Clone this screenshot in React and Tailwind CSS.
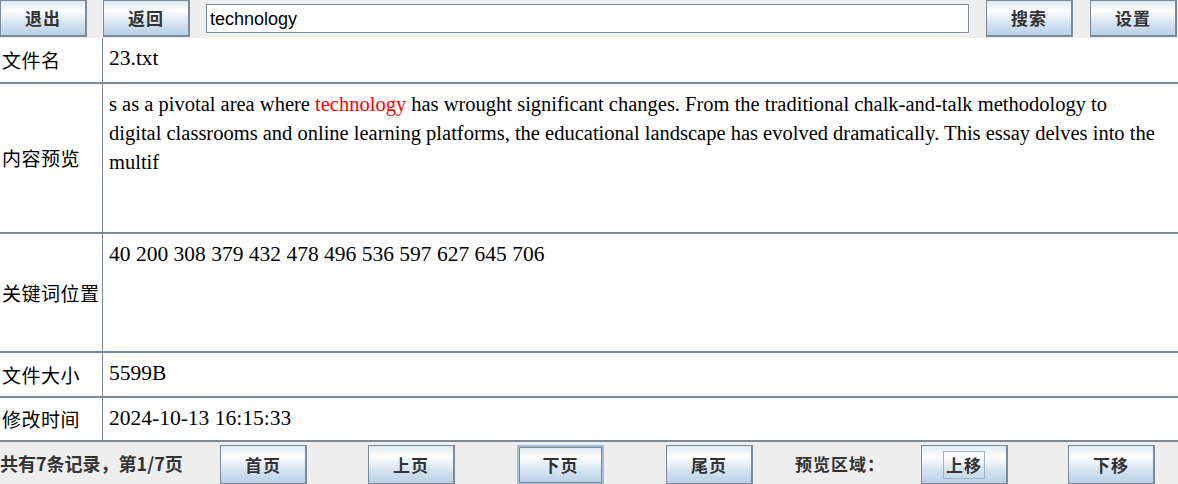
import React from 'react';

const btn =
  'w-[87px] h-[37px] flex items-center justify-center border border-[#7a8a99] border-r-2 border-b-2 bg-[linear-gradient(to_bottom,#dde8f3_0%,#ffffff_28%,#dde8f3_58%,#b8cfe5_100%)] text-[17px] font-bold text-[#333333] tracking-[1px] shrink-0';

const cjk = { fontFamily: '"Noto Sans CJK SC", "Noto Sans", sans-serif' };
const serif = { fontFamily: '"Liberation Serif", "Noto Sans CJK SC", serif' };

const Row = ({ label, h, size = 'text-[21.5px]', children }) => (
  <div className={`flex border-b-2 border-[#7a8a99] ${h}`}>
    <div className="w-[103px] shrink-0 border-r border-[#7a8a99] flex items-center pl-[2px] pt-[1px] text-[19px] tracking-[0.5px] text-black" style={cjk}>
      {label}
    </div>
    <div className={`flex-1 pl-[6px] pt-[6px] ${size} leading-[29px] text-black`} style={serif}>
      {children}
    </div>
  </div>
);

export default function App() {
  return (
    <div className="w-[1178px] h-[484px] bg-white overflow-hidden flex flex-col" style={cjk}>
      {/* top toolbar */}
      <div className="h-[38px] bg-[#eeeeee] flex items-start shrink-0">
        <button className={btn}>退出</button>
        <button className={`${btn} ml-[16px]`}>返回</button>
        <div className="ml-[16px] mt-[4px] w-[763px] h-[29px] bg-white border border-[#7a8a99] shadow-[1px_1px_0_#ffffff,inset_1px_1px_0_#ffffff] flex items-center pl-[3px] pt-[2px] text-[18px] text-black" style={{ fontFamily: '"Liberation Sans", Arial, sans-serif' }}>
          technology
        </div>
        <button className={`${btn} ml-[17px]`}>搜索</button>
        <button className={`${btn} ml-[17px]`}>设置</button>
      </div>

      {/* info table */}
      <div className="flex flex-col shrink-0">
        <Row label="文件名" h="h-[46px]">23.txt</Row>
        <Row label="内容预览" h="h-[150px]" size="text-[20.5px]">
          s as a pivotal area where <span className="text-[#ff0000]">technology</span> has wrought significant changes. From the traditional chalk-and-talk methodology to
          <br />
          digital classrooms and online learning platforms, the educational landscape has evolved dramatically. This essay delves into the
          <br />
          multif
        </Row>
        <Row label="关键词位置" h="h-[119px]">40 200 308 379 432 478 496 536 597 627 645 706</Row>
        <Row label="文件大小" h="h-[45px]">5599B</Row>
        <Row label="修改时间" h="h-[44px]">2024-10-13 16:15:33</Row>
      </div>

      {/* pager */}
      <div className="flex-1 bg-[#eeeeee] flex items-start pt-[3px]">
        <div className="w-[220px] shrink-0 h-[37px] flex items-center text-[18px] font-bold text-[#333333]">
          共有7条记录，第1/7页
        </div>
        <button className={`${btn} h-[40px]`}>首页</button>
        <button className={`${btn} h-[40px] ml-[61px]`}>上页</button>
        <button className={`${btn} h-[40px] ml-[62px] border-2 border-[#a3bdd6] shadow-[inset_0_0_0_1px_#7a8a99]`}>下页</button>
        <button className={`${btn} h-[40px] ml-[62px]`}>尾页</button>
        <div className="ml-[42px] w-[126px] shrink-0 h-[37px] flex items-center text-[17px] font-bold text-[#333333] tracking-[1px]">
          预览区域：
        </div>
        <button className={`${btn} h-[40px]`}>
          <span className="border border-[#9fb4c8] px-[2px] leading-[26px]">上移</span>
        </button>
        <button className={`${btn} h-[40px] ml-[60px]`}>下移</button>
      </div>
    </div>
  );
}
